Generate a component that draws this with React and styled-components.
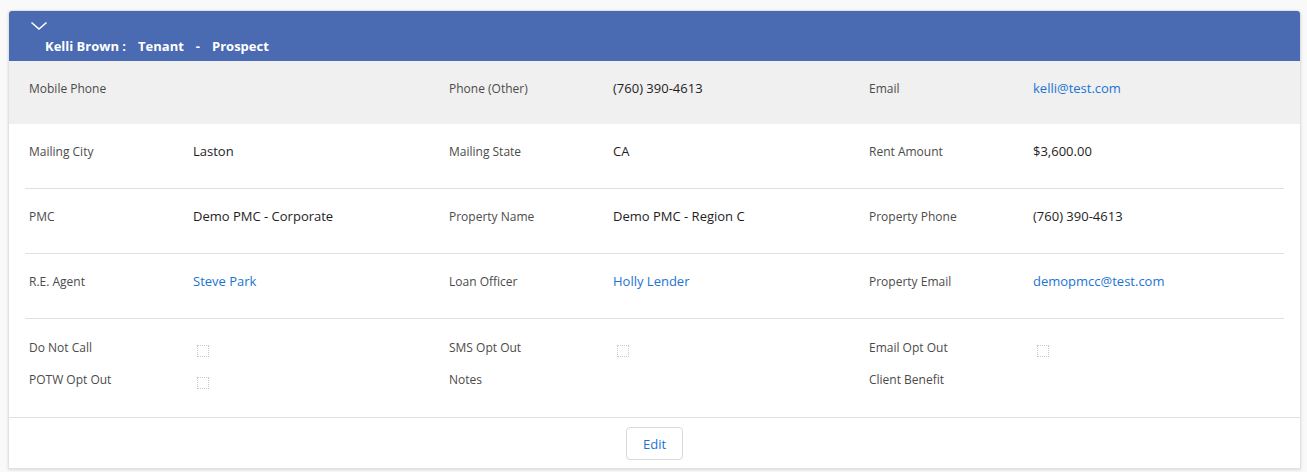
import React from "react";
import styled, { createGlobalStyle } from "styled-components";

const GlobalStyle = createGlobalStyle`
  html, body {
    margin: 0;
    padding: 0;
    background: #f9f9f9;
  }
  body {
    font-family: "Open Sans", "Noto Sans", "Liberation Sans", sans-serif;
    color: #222;
  }
`;

const Page = styled.div`
  padding: 10px 6px 5px 8px;
`;

const Card = styled.section`
  background: #fff;
  border: 1px solid #e2e2e2;
  border-radius: 4px 4px 0 0;
  box-shadow: 0 1px 3px rgba(0, 0, 0, 0.12);
  overflow: hidden;
`;

const Header = styled.header`
  height: 50px;
  box-sizing: border-box;
  background: #4a6ab2;
  padding: 9px 0 0 21px;
  color: #fff;
`;

const Toggle = styled.button`
  display: block;
  border: 0;
  background: none;
  padding: 0;
  width: 18px;
  height: 12px;
  cursor: pointer;
`;

const Title = styled.h2`
  margin: 5px 0 0 15px;
  font-size: 13px;
  font-weight: 700;
  line-height: 18px;
  display: flex;
  gap: 12px;
`;

const Row = styled.div`
  display: grid;
  grid-template-columns: repeat(3, 164px 256px);
  align-items: baseline;
  box-sizing: border-box;
  height: ${(p) => (p.$shaded ? "63px" : "65px")};
  padding: 17px 4px 0;
  margin: ${(p) => (p.$shaded ? "0" : "0 16px")};
  background: ${(p) => (p.$shaded ? "#f0f0f0" : "transparent")};
  padding-left: ${(p) => (p.$shaded ? "20px" : "4px")};
  border-bottom: ${(p) => (p.$shaded ? "none" : "1px solid #e0e0e0")};
`;

const FlagSection = styled.div`
  margin: 0 16px;
  padding: 19px 4px 15px;
  display: grid;
  grid-template-columns: repeat(3, 164px 256px);
  grid-auto-rows: 32px;
  align-items: start;
`;

const Label = styled.span`
  font-size: 12px;
  line-height: 20px;
  color: #4b4b4b;
`;

const Value = styled.span`
  font-size: 13px;
  line-height: 20px;
  color: ${(p) => (p.$link ? "#1b74d4" : "#1e1e1e")};
`;

const Box = styled.span`
  display: block;
  width: 10px;
  height: 10px;
  margin: 7px 0 0 4px;
  border: 1px dotted #c9c9c9;
  border-radius: 1px;
`;

const Footer = styled.footer`
  border-top: 1px solid #e0e0e0;
  padding: 9px 0 8px;
  display: flex;
  justify-content: center;
`;

const EditButton = styled.button`
  width: 57px;
  height: 33px;
  background: #fff;
  border: 1px solid #d9d9d9;
  border-radius: 4px;
  font-family: inherit;
  font-size: 13px;
  color: #1b74d4;
  cursor: pointer;
`;

const rows = [
  [
    ["Mobile Phone", ""],
    ["Phone (Other)", "(760) 390-4613"],
    ["Email", "kelli@test.com", true],
  ],
  [
    ["Mailing City", "Laston"],
    ["Mailing State", "CA"],
    ["Rent Amount", "$3,600.00"],
  ],
  [
    ["PMC", "Demo PMC - Corporate"],
    ["Property Name", "Demo PMC - Region C"],
    ["Property Phone", "(760) 390-4613"],
  ],
  [
    ["R.E. Agent", "Steve Park", true],
    ["Loan Officer", "Holly Lender", true],
    ["Property Email", "demopmcc@test.com", true],
  ],
];

const flags = [
  ["Do Not Call", true],
  ["SMS Opt Out", true],
  ["Email Opt Out", true],
  ["POTW Opt Out", true],
  ["Notes", false],
  ["Client Benefit", false],
];

export default function App() {
  return (
    <>
      <GlobalStyle />
      <Page>
        <Card>
          <Header>
            <Toggle aria-label="Collapse">
              <svg width="18" height="12" viewBox="0 0 18 12">
                <path d="M1.5 2.5 L9 9 L16.5 2.5" fill="none" stroke="#fff" strokeWidth="1.6" />
              </svg>
            </Toggle>
            <Title>
              <span>Kelli Brown :</span>
              <span>Tenant</span>
              <span>-</span>
              <span>Prospect</span>
            </Title>
          </Header>
          {rows.map((row, i) => (
            <Row key={i} $shaded={i === 0}>
              {row.map(([label, value, link]) => (
                <React.Fragment key={label}>
                  <Label>{label}</Label>
                  <Value $link={link}>{value}</Value>
                </React.Fragment>
              ))}
            </Row>
          ))}
          <FlagSection>
            {flags.map(([label, box]) => (
              <React.Fragment key={label}>
                <Label>{label}</Label>
                <span>{box && <Box />}</span>
              </React.Fragment>
            ))}
          </FlagSection>
          <Footer>
            <EditButton>Edit</EditButton>
          </Footer>
        </Card>
      </Page>
    </>
  );
}
